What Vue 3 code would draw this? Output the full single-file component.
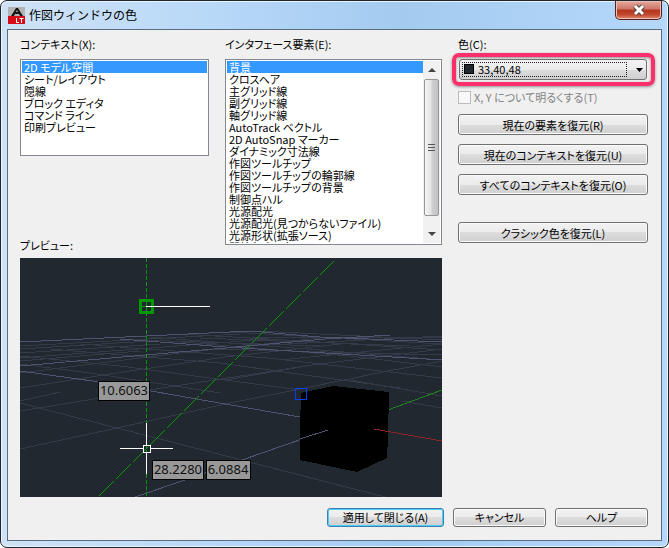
<script setup>
import { ref } from 'vue'

const contexts = ['2D モデル空間', 'シート/レイアウト', '隠線', 'ブロック エディタ', 'コマンド ライン', '印刷プレビュー']
const elements = [
  '背景', 'クロスヘア', '主グリッド線', '副グリッド線', '軸グリッド線',
  'AutoTrack ベクトル', '2D AutoSnap マーカー', 'ダイナミック寸法線',
  '作図ツールチップ', '作図ツールチップの輪郭線', '作図ツールチップの背景',
  '制御点ハル', '光源配光', '光源配光(見つからないファイル)', '光源形状(拡張ソース)', '開始角度の色'
]
const context = ref(contexts[0])
const element = ref(elements[0])
const color = ref('33,40,48')

const minorLines = [
  [0, 130, 90, 116], [0, 153, 123, 133], [123, 133, 292, 107], [292, 107, 422, 91],
  [0, 191, 97, 170], [97, 170, 210, 145], [210, 145, 285, 130], [285, 130, 368, 113], [368, 113, 422, 103],
  [0, 145, 97, 170], [97, 170, 210, 199], [210, 199, 365, 239],
  [90, 116, 205, 99], [205, 99, 320, 86], [0, 143, 40, 134], [0, 115, 160, 95], [160, 95, 300, 80],
  [0, 100, 170, 87], [170, 87, 250, 81], [0, 95, 140, 86], [0, 91, 130, 83], [0, 103, 120, 93],
  [0, 88, 220, 76], [30, 91, 200, 105], [200, 105, 285, 117], [285, 117, 380, 130],
  [0, 98, 100, 108], [100, 108, 205, 122], [205, 122, 280, 132], [0, 106, 70, 115], [70, 115, 200, 135],
  [60, 86, 248, 100], [248, 100, 422, 120], [150, 83, 330, 98], [330, 98, 422, 109], [130, 79, 300, 92],
  [300, 92, 422, 102], [160, 76, 300, 84], [300, 84, 422, 92], [210, 74, 422, 86], [238, 73, 422, 82],
  [230, 79, 422, 80], [205, 122, 292, 107], [260, 102, 422, 86], [230, 88, 422, 78],
  [120, 82, 300, 88], [190, 91, 422, 97], [180, 80, 390, 88], [382, 143, 422, 150], [330, 122, 422, 138]
]
const majorLines = [
  [0, 84, 210, 74], [210, 74, 240, 73], [0, 108, 205, 90], [205, 90, 305, 81], [305, 81, 370, 77],
  [0, 113, 80, 124], [80, 124, 205, 146], [205, 146, 280, 159],
  [100, 81, 205, 89], [205, 89, 422, 102], [230, 73, 300, 79], [300, 79, 422, 84],
  [115, 239, 165, 222], [165, 222, 222, 202], [222, 202, 308, 172]
]
</script>

<template>
  <main class="window">
    <header class="titlebar">
      <svg class="app-icon" viewBox="0 0 17 17" aria-hidden="true">
        <rect width="17" height="17" fill="#777" />
        <path d="M0 0h17v9H0z" fill="#b4b4b4" />
        <path d="M0 9h17v8H0z" fill="#d80b18" />
        <path d="M3 9h3l1-2h4l1 2h3L10 1H8z" fill="#171717" />
        <path d="M8 5h2L9 3z" fill="#b4b4b4" />
        <path d="M8.500 11v4.500H11M11.500 11.500h4M13.500 11v5" fill="none" stroke="#fff" />
      </svg>
      <h1>作図ウィンドウの色</h1>
      <button class="close" type="button" aria-label="閉じる">
        <svg viewBox="0 0 14 12" aria-hidden="true">
          <path d="m3 2 8 8M11 2l-8 8" stroke="#57433f" stroke-width="5" />
          <path d="m3 2 8 8M11 2l-8 8" stroke="#fff" stroke-width="3" />
        </svg>
      </button>
    </header>

    <section class="client">
      <div class="columns">
        <div class="main">
          <div class="lists">
            <div class="stack">
              <label for="context">コンテキスト(X):</label>
              <div class="listbox">
                <select id="context" v-model="context" class="list context-list" size="8">
                  <option v-for="c in contexts" :key="c">{{ c }}</option>
                </select>
              </div>
              <span class="preview-label">プレビュー:</span>
            </div>
            <div class="stack element-stack">
              <label for="element">インタフェース要素(E):</label>
              <div class="listbox">
                <select id="element" v-model="element" class="list element-list" size="15">
                  <option v-for="e in elements" :key="e">{{ e }}</option>
                </select>
                <div class="scrollbar" aria-hidden="true">
                  <svg viewBox="0 0 8 4"><path d="M4 0 8 4H0z" fill="#444" /></svg>
                  <div class="thumb"><i></i><i></i><i></i></div>
                  <svg viewBox="0 0 8 4"><path d="M0 0h8L4 4z" fill="#444" /></svg>
                </div>
              </div>
            </div>
          </div>

          <svg class="preview" viewBox="0 0 422 239" role="img" aria-label="プレビュー">
            <rect width="422" height="239" fill="#212830" />
            <g shape-rendering="crispEdges">
              <line v-for="(l, i) in minorLines" :key="'n' + i" :x1="l[0]" :y1="l[1]" :x2="l[2]" :y2="l[3]" stroke="#343a48" />
              <line v-for="(l, i) in majorLines" :key="'j' + i" :x1="l[0]" :y1="l[1]" :x2="l[2]" :y2="l[3]" stroke="#4f5470" />
              <path d="M368 152 422 132" stroke="#228022" />
              <path d="m281 135 32-7 56 6-1 45-1 21-30 14-57-12v-32z" fill="#000" />
              <path d="m280 181 28-9" stroke="#505470" />
              <path d="m354 171 68 12" stroke="#8c2526" />
              <rect x="275.500" y="130.500" width="11" height="11" fill="none" stroke="#0040ff" />
              <path d="M126.500 0v239" stroke="#009900" stroke-dasharray="4 2" />
              <path d="M79 238 315 2" stroke="#009900" stroke-dasharray="21 3" />
              <rect x="120.500" y="42.500" width="12" height="12" fill="none" stroke="#009900" stroke-width="3" />
              <path d="M121 48.500h11M126.500 43v11" stroke="#009900" />
              <path d="M126 48.500h64M100 190.500h23M131 190.500h22M126.500 165v22M126.500 195v21" stroke="#fff" />
              <rect x="123.500" y="187.500" width="7" height="7" fill="none" stroke="#fff" />
              <g fill="#999" stroke="#000">
                <rect x="78.500" y="123.500" width="51" height="19" />
                <rect x="132.500" y="202.500" width="51" height="19" />
                <rect x="186.500" y="202.500" width="44" height="19" />
              </g>
            </g>
            <g class="dimension">
              <text x="104" y="137">10.6063</text>
              <text x="158" y="216">28.2280</text>
              <text x="208" y="216">6.0884</text>
            </g>
          </svg>
        </div>

        <div class="side">
          <label for="color">色(C):</label>
          <div class="color-field">
            <select id="color" v-model="color">
              <option>33,40,48</option>
            </select>
            <span class="focus"></span>
            <span class="swatch"></span>
            <svg class="arrow" viewBox="0 0 7 4" aria-hidden="true"><path d="M0 0h7L3.500 4z" /></svg>
          </div>
          <label class="tint"><input type="checkbox" disabled />X, Y について明るくする(T)</label>
          <div class="restore">
            <button type="button">現在の要素を復元(R)</button>
            <button type="button">現在のコンテキストを復元(U)</button>
            <button type="button">すべてのコンテキストを復元(O)</button>
          </div>
          <button type="button">クラシック色を復元(L)</button>
        </div>
      </div>

      <footer class="actions">
        <button class="primary" type="button">適用して閉じる(A)</button>
        <button type="button">キャンセル</button>
        <button type="button">ヘルプ</button>
      </footer>
    </section>
  </main>
</template>

<style>
body {
  margin: 0;
  background: #fff;
}
</style>

<style scoped>
* {
  box-sizing: border-box;
}
.window {
  padding: 0 6px 6px;
  border: 1px solid #20242c;
  border-radius: 7px;
  background: linear-gradient(90deg, #cfe2f5 0, #b9d9f8 30%, #a3cbf0 60%, #b5d8fa 100%);
  box-shadow: inset 0 0 0 1px #e9f5ff;
  font: 11px/16px "Noto Sans CJK JP", sans-serif;
  font-feature-settings: "palt";
  color: #000;
}
.titlebar {
  display: flex;
  align-items: center;
  height: 28px;
}
.app-icon {
  width: 17px;
  height: 17px;
  margin-left: 1px;
}
h1 {
  flex: 1;
  margin: 0 0 0 4px;
  font-size: 12px;
  line-height: 16px;
  font-weight: 400;
  font-feature-settings: normal;
}
.close {
  align-self: flex-start;
  display: grid;
  place-items: center;
  width: 47px;
  height: 19px;
  min-height: 0;
  padding: 0;
  border: 1px solid #53201c;
  border-top: 0;
  border-radius: 0 0 5px 5px;
  background: linear-gradient(#e2a99e, #cf7566 45%, #b5351e 50%, #c0472c 75%, #dc8b70);
  box-shadow: inset 0 0 0 1px #ecc0b7;
}
.close svg {
  width: 14px;
  height: 12px;
}
.client {
  padding: 6px 13px 13px 12px;
  border: 1px solid #5a6c82;
  background: #f0f0f0;
}
.columns {
  display: flex;
  gap: 16px;
}
.main {
  flex: 422;
  min-width: 0;
}
.lists {
  display: grid;
  grid-template-columns: 189fr 217fr;
  gap: 16px;
  margin-bottom: 5px;
}
.stack {
  display: flex;
  flex-direction: column;
  gap: 7px;
  min-width: 0;
}
.element-stack {
  padding-bottom: 8px;
}
.preview-label {
  margin-top: auto;
}
.listbox {
  display: flex;
  padding: 1px;
  border: 1px solid #828790;
  background: #fff;
}
.list {
  flex: 1;
  min-width: 0;
  padding: 0;
  border: 0;
  outline: 0;
  border-radius: 0;
  background: #fff;
  overflow: hidden;
  font: inherit;
  font-feature-settings: inherit;
}
.context-list {
  height: 93px;
}
.element-list {
  height: 182px;
}
.list option {
  display: flex;
  align-items: center;
  min-height: 12px;
  height: 12px;
  padding: 0 2px;
  color: #000;
}
.list option:checked {
  background: linear-gradient(#3399ff, #3399ff);
  -webkit-text-fill-color: #fff;
}
.scrollbar {
  display: flex;
  flex-direction: column;
  align-items: center;
  gap: 7px;
  width: 17px;
  padding: 7px 1px;
  background: #f1f1f1;
}
.scrollbar svg {
  width: 8px;
  height: 4px;
}
.thumb {
  flex: 1;
  align-self: stretch;
  display: flex;
  flex-direction: column;
  align-items: center;
  justify-content: center;
  gap: 2px;
  margin-bottom: 9px;
  border: 1px solid #979797;
  border-radius: 2px;
  background: linear-gradient(90deg, #f5f5f5, #e4e4e6 45%, #cfcfd2 55%, #c2c2c6);
}
.thumb i {
  width: 7px;
  height: 1px;
  background: #555;
}
.preview {
  display: block;
  width: 100%;
}
.dimension {
  font: 13px "Noto Sans", sans-serif;
  text-anchor: middle;
  fill: #111;
}
.side {
  flex: 190;
  display: flex;
  flex-direction: column;
  min-width: 0;
}
.color-field {
  position: relative;
  margin: 1px -7px 0 -6px;
  padding: 2px 4px 2px 3px;
  border: 4px solid #fa2f6c;
  border-radius: 7px;
  box-shadow: 0 1px 3px #0006, inset 0 1px 3px #0006;
}
.color-field select {
  display: block;
  appearance: none;
  width: 100%;
  height: 21px;
  padding: 0 20px 2px 18px;
  border: 1px solid #707070;
  border-radius: 3px;
  outline: 0;
  background: linear-gradient(#f2f2f2, #ebebeb 50%, #dddddd 50%, #cfcfcf);
  font: inherit;
  font-feature-settings: inherit;
  color: #000;
}
.focus {
  position: absolute;
  inset: 5px 24px 5px 6px;
  border: 1px dotted #222;
  pointer-events: none;
}
.swatch {
  position: absolute;
  top: 7px;
  left: 8px;
  width: 10px;
  height: 10px;
  border: 1px solid #000;
  background: #212830;
  pointer-events: none;
}
.arrow {
  position: absolute;
  top: 11px;
  right: 8px;
  width: 7px;
  height: 4px;
  pointer-events: none;
}
.tint {
  display: flex;
  align-items: center;
  gap: 3px;
  margin: 3px 0 9px;
  color: #838383;
  white-space: nowrap;
}
.tint input {
  appearance: none;
  flex: none;
  width: 13px;
  height: 13px;
  margin: 0;
  border: 1px solid #bcbcbc;
  background: #f8f8f8;
}
.restore {
  display: grid;
  gap: 9px;
  margin-bottom: 27px;
}
button {
  min-height: 21px;
  padding: 0 4px;
  border: 1px solid #707070;
  border-radius: 3px;
  background: linear-gradient(#f2f2f2, #ebebeb 50%, #dddddd 50%, #cfcfcf);
  box-shadow: inset 0 0 0 1px #fbfbfb;
  font: inherit;
  font-feature-settings: inherit;
  color: #000;
  white-space: nowrap;
}
.actions {
  display: flex;
  justify-content: flex-end;
  gap: 9px;
  margin-top: 11px;
}
.actions button {
  min-width: 93px;
  min-height: 19px;
  line-height: 17px;
}
.actions .primary {
  min-width: 117px;
  border-color: #3c7fb1;
  box-shadow: inset 0 0 0 1px #48d0f5;
}
</style>
